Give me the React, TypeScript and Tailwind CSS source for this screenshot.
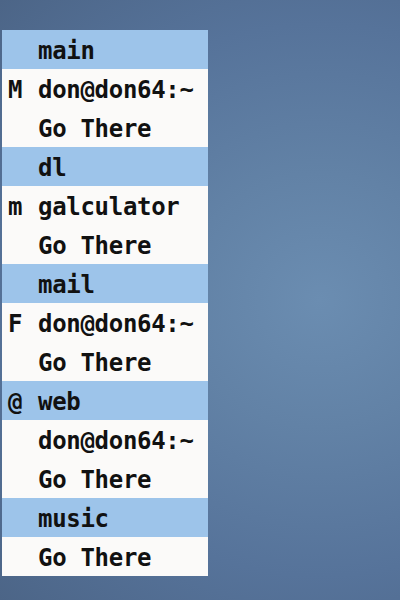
import React from "react";

type Row = { k: string; t: string; h?: boolean };

const rows: Row[] = [
  { k: "", t: "main", h: true },
  { k: "M", t: "don@don64:~" },
  { k: "", t: "Go There" },
  { k: "", t: "dl", h: true },
  { k: "m", t: "galculator" },
  { k: "", t: "Go There" },
  { k: "", t: "mail", h: true },
  { k: "F", t: "don@don64:~" },
  { k: "", t: "Go There" },
  { k: "@", t: "web", h: true },
  { k: "", t: "don@don64:~" },
  { k: "", t: "Go There" },
  { k: "", t: "music", h: true },
  { k: "", t: "Go There" },
];

export default function App() {
  return (
    <div className="w-[400px] h-[600px] overflow-hidden pt-[30px] pl-[2px] bg-[radial-gradient(ellipse_at_80%_50%,#6b8db1_0%,#6282a6_30%,#56739a_65%,#4c6587_100%)]">
      <div
        className="w-[206px] flex flex-col bg-[#fbfaf9]"
        style={{ fontFamily: '"DejaVu Sans Mono", monospace' }}
      >
        {rows.map((r, i) => (
          <div
            key={i}
            className={`h-[39px] flex items-center pt-[3px] pl-[6px] text-[24px] font-bold text-[#111] ${
              r.h ? "bg-[#9dc4ea] text-[#0f1a2a]" : ""
            }`}
          >
            <span className="w-[30px] shrink-0">{r.k}</span>
            <span className="whitespace-nowrap tracking-[-0.3px]">{r.t}</span>
          </div>
        ))}
      </div>
    </div>
  );
}
